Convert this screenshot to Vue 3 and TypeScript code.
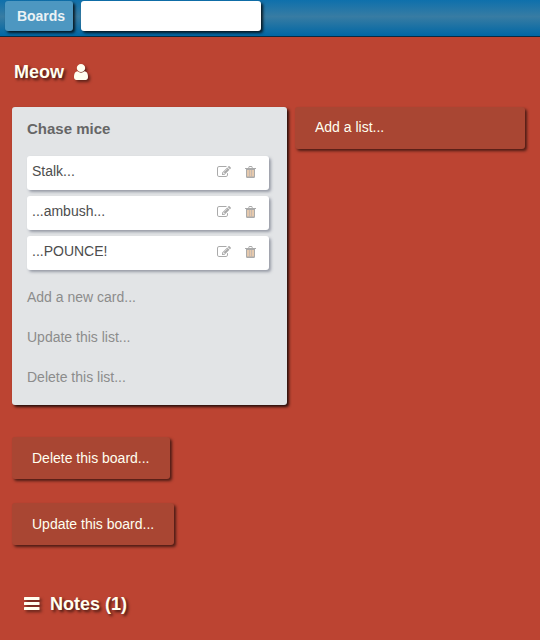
<script setup lang="ts">
import { ref } from 'vue'

interface Card {
  id: number
  title: string
}

const search = ref<string>('')
const cards = ref<Card[]>([
  { id: 1, title: 'Stalk...' },
  { id: 2, title: '...ambush...' },
  { id: 3, title: '...POUNCE!' },
])
const listActions: string[] = ['Add a new card...', 'Update this list...', 'Delete this list...']
const boardActions: string[] = ['Delete this board...', 'Update this board...']
</script>

<template>
  <div class="page">
    <header class="topbar">
      <button class="boards" type="button">Boards</button>
      <input v-model="search" class="search" type="text" />
    </header>

    <main class="board">
      <h1 class="title">
        <span>Meow</span>
        <svg class="icon-user" viewBox="256 128 1280 1536" preserveAspectRatio="none">
          <path d="M1536 1399q0 109-62.5 187t-150.5 78h-854q-88 0-150.5-78t-62.5-187q0-85 8.5-160.5t31.5-152 58.5-131 94-89 134.5-34.5q131 128 313 128t313-128q76 0 134.5 34.5t94 89 58.5 131 31.5 152 8.5 160.5zm-256-887q0 159-112.5 271.5t-271.5 112.5-271.5-112.5-112.5-271.5 112.5-271.5 271.5-112.5 271.5 112.5 112.5 271.5z" />
        </svg>
      </h1>

      <div class="lists">
        <section class="list">
          <h2 class="list-title">Chase mice</h2>
          <ul class="cards">
            <li v-for="card in cards" :key="card.id" class="card">
              <span class="card-title">{{ card.title }}</span>
              <svg class="icon-edit" viewBox="0 128 1792 1536" preserveAspectRatio="none">
                <path d="M888 1184l116-116-152-152-116 116v56h96v96h56zm440-720q-16-16-33 1l-350 350q-17 17-1 33t33-1l350-350q17-17 1-33zm80 594v190q0 119-84.500 203.500t-203.500 84.500h-832q-119 0-203.500-84.500t-84.500-203.500v-832q0-119 84.500-203.500t203.500-84.500h832q63 0 117 25 15 7 18 23 3 17-9 29l-49 49q-14 14-32 8-23-6-45-6h-832q-66 0-113 47t-47 113v832q0 66 47 113t113 47h832q66 0 113-47t47-113v-126q0-13 9-22l64-64q15-15 35-7t20 29zm-96-738l288 288-672 672h-288v-288zm444 132l-92 92-288-288 92-92q28-28 68-28t68 28l152 152q28 28 28 68t-28 68z" />
              </svg>
              <svg class="icon-trash" viewBox="0 0 11 12">
                <path d="M3.200 2L3.800.5Q4 0 4.600 0h1.800Q7 0 7.200.5L7.800 2H11v1h-1v7.500Q10 12 8.700 12H2.300Q1 12 1 10.500V3H0V2zM4.100 2h2.800l-.4-1h-2z" />
                <path class="slots" d="M2 4h7v6.500H2z" />
                <path class="ribs" d="M4 4h.6v6.500H4zM6.400 4H7v6.500h-.6z" />
              </svg>
            </li>
          </ul>
          <div class="list-actions">
            <a v-for="action in listActions" :key="action">{{ action }}</a>
          </div>
        </section>
        <button class="action add-list" type="button">Add a list...</button>
      </div>

      <div class="board-actions">
        <button v-for="action in boardActions" :key="action" class="action" type="button">{{ action }}</button>
      </div>

      <h2 class="notes">
        <svg class="icon-bars" viewBox="0 0 16 13">
          <rect width="15.500" height="3" rx=".6" />
          <rect y="5" width="15.500" height="3" rx=".6" />
          <rect y="10" width="15.500" height="3" rx=".6" />
        </svg>
        <span>Notes (1)</span>
      </h2>
    </main>
  </div>
</template>

<style>
body {
  margin: 0;
  background: #bc4432;
}
</style>

<style scoped>
.page {
  box-sizing: border-box;
  height: 640px;
  overflow: hidden;
  background: #bc4432;
  color: ivory;
  font: 14px/20px "Liberation Sans", Arial, sans-serif;
}

.page * {
  box-sizing: border-box;
}

.topbar {
  display: flex;
  gap: 8px;
  height: 37px;
  padding: 1px 5px 0;
  border-bottom: 1px solid #0b2b42;
  background: linear-gradient(#0e70ac, #387ca3 46%, #0067a5);
}

.boards,
.search {
  height: 30px;
  margin: 0;
  border: 0;
  border-radius: 3px;
  box-shadow: 2px 2px 3px rgba(0, 0, 0, 0.8);
  font-family: inherit;
  font-size: 14px;
}

.boards {
  width: 68px;
  padding: 0 0 0 4px;
  background: #4d97c1;
  color: #ebf2f5;
  font-weight: bold;
}

.search {
  width: 180px;
  padding: 0 8px;
  background: #fff;
  outline: 0;
}

.board {
  padding: 25px 15px 0 12px;
}

svg {
  flex: none;
  display: block;
  fill: currentColor;
}

.title,
.notes {
  display: flex;
  align-items: center;
  height: 20px;
  margin: 0;
  font-size: 18px;
  line-height: 20px;
  text-shadow: 2px 2px 3px rgba(0, 0, 0, 0.65);
}

.title {
  gap: 10px;
  padding-left: 2px;
}

.title svg,
.notes svg {
  filter: drop-shadow(2px 2px 1.5px rgba(0, 0, 0, 0.5));
}

.icon-user {
  width: 14px;
  height: 16px;
  margin-bottom: 1px;
}

.lists {
  display: flex;
  align-items: flex-start;
  gap: 8px;
  margin-top: 25px;
}

.list {
  width: 275px;
  height: 298px;
  padding: 12px 18px 0 15px;
  border-radius: 3px;
  background: #e2e4e6;
  box-shadow: 2px 2px 3px rgba(0, 0, 0, 0.8);
}

.list-title {
  margin: 0 0 17px;
  color: #666;
  font-size: 15px;
  line-height: 20px;
}

.cards {
  display: grid;
  gap: 6px;
  margin: 0;
  padding: 0;
  list-style: none;
}

.card {
  display: flex;
  height: 34px;
  padding: 5px 13px 0 5px;
  border-radius: 3px;
  background: #fff;
  box-shadow: 2px 2px 3px rgba(120, 125, 140, 0.7);
  color: #4d4d4d;
}

.card-title {
  flex: 1;
}

.card svg {
  color: #aaa;
}

.icon-edit {
  width: 14px;
  height: 12px;
  margin: 5px 14px 0 0;
}

.icon-trash {
  width: 11px;
  height: 12px;
  margin-top: 5px;
}

.slots {
  fill: #e5c9ad;
}

.ribs {
  fill: #b5afb0;
}

.list-actions {
  display: grid;
  gap: 20px;
  margin-top: 17px;
  color: #8c8c8c;
}

.action {
  height: 42px;
  margin: 0;
  padding: 0 20px;
  border: 0;
  border-radius: 3px;
  background: #a94633;
  box-shadow: 2px 2px 3px rgba(0, 0, 0, 0.6);
  color: ivory;
  font: inherit;
  text-align: left;
}

.add-list {
  flex: 1;
  padding-bottom: 2px;
}

.board-actions {
  display: flex;
  flex-direction: column;
  align-items: flex-start;
  gap: 24px;
  margin-top: 32px;
}

.notes {
  gap: 10px;
  margin-top: 49px;
  padding-left: 12px;
}

.icon-bars {
  width: 16px;
  height: 13px;
  margin-bottom: 1px;
}
</style>
